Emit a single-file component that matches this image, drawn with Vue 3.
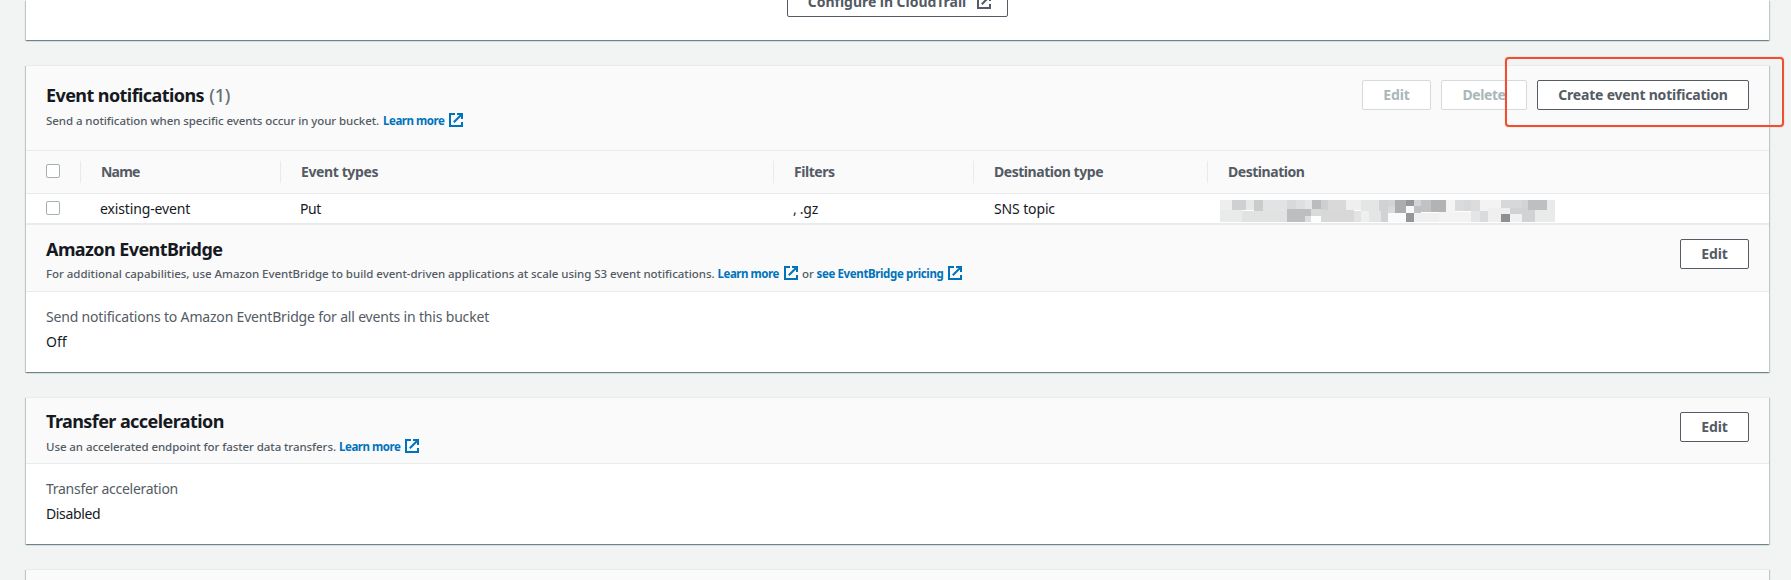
<script setup>
import { h } from 'vue'

const ExternalIcon = () =>
  h('svg', { class: 'ext', viewBox: '0 0 14 14', width: 14, height: 14, fill: 'none', stroke: 'currentColor', 'stroke-width': 2 }, [
    h('path', { d: 'M6 1H1V13H13V9' }),
    h('path', { d: 'M8 1H13V6' }),
    h('path', { d: 'M13 1L4.8 9.2' })
  ])

// x, y, width, height, fill of each block in the redacted destination
const blocks = [
  [0, 0, 36, 30, '#eeeeee'], [36, 0, 42, 30, '#cfd0d1'], [78, 0, 24, 30, '#e6e8e7'], [102, 0, 27, 33, '#c9cbcc'],
  [0, 30, 66, 36, '#e9ebea'], [66, 33, 135, 33, '#e1e3e2'], [129, 0, 72, 36, '#e2e3e4'],
  [201, 0, 27, 27, '#d7d9db'], [228, 0, 27, 27, '#dddfe1'], [255, 0, 21, 27, '#e5e6e7'], [276, 0, 27, 27, '#bbbcbe'],
  [303, 0, 21, 30, '#cecfd1'], [201, 27, 72, 39, '#bdbec0'], [273, 27, 30, 21, '#d9dadb'], [255, 48, 18, 18, '#dcdedf'],
  [273, 48, 30, 18, '#fdfdfd'], [324, 0, 54, 66, '#d9d9d9'], [303, 30, 99, 36, '#d8d8d8'],
  [378, 0, 45, 30, '#efefef'], [423, 0, 54, 33, '#e3e6e5'], [402, 33, 21, 33, '#e1e4e3'], [423, 33, 24, 33, '#efefef'],
  [447, 33, 36, 33, '#e3e6e5'], [477, 0, 27, 33, '#d0d2d4'], [483, 33, 21, 33, '#d0d2d4'], [504, 0, 21, 21, '#d3d4d6'],
  [504, 21, 21, 18, '#d9dadb'], [525, 0, 33, 39, '#acadaf'], [558, 0, 24, 18, '#96979b'], [504, 39, 54, 27, '#fafafa'],
  [558, 18, 24, 21, '#fafafa'], [558, 39, 24, 27, '#96979b'], [582, 0, 21, 18, '#d3d4d7'], [582, 18, 21, 21, '#c0c1c3'],
  [603, 0, 30, 36, '#c1c2c4'], [633, 0, 45, 36, '#b2b3b5'], [582, 38, 75, 28, '#f0f0f0'], [657, 36, 96, 30, '#f3f3f3'],
  [678, 0, 27, 36, '#f4f4f4'], [705, 0, 27, 33, '#dadbdd'], [732, 0, 21, 33, '#d6d8da'], [753, 0, 27, 33, '#dadcde'],
  [753, 33, 27, 33, '#e3e6e5'], [780, 33, 24, 33, '#d9dbdd'], [780, 0, 63, 33, '#f3f3f3'], [804, 24, 66, 42, '#efefef'],
  [843, 0, 63, 24, '#d6d8da'], [843, 42, 27, 24, '#8f9093'], [870, 24, 54, 18, '#d1d2d4'], [870, 42, 36, 24, '#f1f1f1'],
  [906, 30, 39, 36, '#d1d2d4'], [906, 0, 18, 24, '#d3d4d6'], [924, 0, 57, 30, '#bebfc1'], [945, 30, 60, 36, '#e9ebea'],
  [981, 0, 24, 30, '#e9ebea']
]
</script>

<template>
  <main class="page">
    <section class="card card-top">
      <button class="btn btn-trail">Configure in CloudTrail<ExternalIcon /></button>
    </section>

    <section class="card card-events">
      <header class="head head-events">
        <div>
          <h2>Event notifications <span class="count">(1)</span></h2>
          <p class="desc">
            <span class="d1">Send a notification when specific events occur in your bucket.</span>
            <a>Learn more</a><ExternalIcon />
          </p>
        </div>
        <div class="actions">
          <button class="btn off w-edit">Edit</button>
          <button class="btn off w-delete">Delete</button>
          <button class="btn w-create">Create event notification</button>
        </div>
        <div class="highlight"></div>
      </header>
      <div class="row thead">
        <div class="check"><i class="box"></i></div>
        <div class="name">Name</div>
        <div class="types">Event types</div>
        <div class="filters">Filters</div>
        <div class="kind">Destination type</div>
        <div class="dest">Destination</div>
      </div>
      <div class="row trow">
        <div class="check"><i class="box"></i></div>
        <div class="name">existing-event</div>
        <div class="types">Put</div>
        <div class="filters">, .gz</div>
        <div class="kind">SNS topic</div>
        <div class="dest">
          <svg class="mosaic" viewBox="0 0 1005 66" width="335" height="22" shape-rendering="crispEdges">
            <rect v-for="(b, i) in blocks" :key="i" :x="b[0]" :y="b[1]" :width="b[2]" :height="b[3]" :fill="b[4]" />
          </svg>
        </div>
      </div>
      <header class="head head-bridge">
        <div>
          <h2>Amazon EventBridge</h2>
          <p class="desc">
            <span class="d2">For additional capabilities, use Amazon EventBridge to build event-driven applications at scale using S3 event notifications.</span>
            <a>Learn more</a><ExternalIcon /><span class="or">or</span><a class="pricing">see EventBridge pricing</a><ExternalIcon />
          </p>
        </div>
        <button class="btn w-edit">Edit</button>
      </header>
      <div class="body">
        <div class="label">Send notifications to Amazon EventBridge for all events in this bucket</div>
        <div class="value">Off</div>
      </div>
    </section>

    <section class="card card-accel">
      <header class="head head-accel">
        <div>
          <h2>Transfer acceleration</h2>
          <p class="desc">
            <span class="d3">Use an accelerated endpoint for faster data transfers.</span>
            <a>Learn more</a><ExternalIcon />
          </p>
        </div>
        <button class="btn w-edit">Edit</button>
      </header>
      <div class="body">
        <div class="label tight">Transfer acceleration</div>
        <div class="value disabled">Disabled</div>
      </div>
    </section>

    <section class="card card-last"></section>
  </main>
</template>

<style>
body {
  background: #f2f3f3;
  overflow: hidden;
}
</style>

<style scoped>
.page {
  height: 580px;
  overflow: hidden;
  padding: 0 22px 0 26px;
  box-sizing: border-box;
  background: #f2f3f3;
  font-family: "Noto Sans", "Open Sans", sans-serif;
  font-size: 14px;
  line-height: 22px;
  color: #16191f;
  white-space: nowrap;
}
.card {
  box-sizing: border-box;
  background: #fff;
  border-top: 1px solid #e8ebeb;
  box-shadow: 0 1px 1px 0 rgba(0, 40, 52, 0.34), 1px 1px 1px 0 rgba(0, 40, 52, 0.17), -1px 1px 1px 0 rgba(0, 40, 52, 0.17);
  margin-bottom: 25px;
}
.card-top {
  height: 40px;
  border-top: 0;
  display: flex;
  justify-content: center;
  align-items: flex-start;
}
.card-events { height: 307px; }
.card-accel { height: 147px; }
.card-last { height: 40px; background: #fafafa; }

.head {
  box-sizing: border-box;
  display: flex;
  justify-content: space-between;
  align-items: flex-start;
  background: #fafafa;
  border-bottom: 1px solid #e8ebeb;
  padding: 0 20px;
}
.head-events { height: 85px; padding-top: 18px; position: relative; }
.head-events .actions { margin-top: -4px; }
.head-bridge { height: 67px; padding-top: 13px; }
.head-bridge .btn { margin-top: 1px; }
.head-accel { height: 66px; padding-top: 12px; }
.head-accel .btn { margin-top: 2px; }

h2 {
  margin: 0;
  font-size: 18px;
  line-height: 22px;
  font-weight: 700;
  letter-spacing: -0.58px;
}
.count {
  font-weight: 500;
  color: #687078;
  letter-spacing: -0.1px;
  margin-left: 1px;
}
.desc {
  margin: 7px 0 0;
  font-size: 11.5px;
  line-height: 16px;
  height: 16px;
  font-weight: 500;
  color: #545b64;
  display: flex;
  align-items: center;
}
.head-bridge .desc { margin-top: 6px; }
.d1 { letter-spacing: -0.073px; width: 337px; }
.d2 { letter-spacing: -0.04px; width: 671.5px; }
.d3 { letter-spacing: -0.08px; width: 293px; }
a {
  color: #0073bb;
  font-weight: 700;
  letter-spacing: -0.45px;
  width: 66px;
}
.d2 + a { width: 66.5px; }
a.pricing { letter-spacing: -0.37px; width: 131.5px; }
.or { width: 14.5px; margin-left: 4px; }
.ext { flex: none; display: block; }
.desc .ext { color: #0073bb; position: relative; top: -1px; }

.actions { display: flex; gap: 10px; }
.btn {
  box-sizing: border-box;
  height: 30px;
  padding: 0;
  display: flex;
  justify-content: center;
  align-items: center;
  background: #fff;
  border: 1px solid #545b64;
  border-radius: 2px;
  font: 700 14px/22px "Noto Sans", "Open Sans", sans-serif;
  color: #545b64;
  letter-spacing: -0.2px;
}
.off { color: #aab7b8; border-color: #d5dbdb; }
.w-edit { width: 69px; letter-spacing: -0.1px; }
.w-delete { width: 86px; letter-spacing: -0.42px; }
.w-create { width: 212px; }
.btn-trail { width: 221px; margin-top: -13px; letter-spacing: -0.04px; }
.btn-trail .ext { margin: 0 -4px 0 11px; }

.highlight {
  position: absolute;
  left: 1478.5px;
  top: -9.5px;
  width: 279.5px;
  height: 70px;
  box-sizing: border-box;
  border: 2px solid #f04e30;
  border-radius: 4px;
  box-shadow: 0 0 1px rgba(240, 78, 48, 0.8);
}

.row { box-sizing: border-box; display: flex; align-items: center; }
.row > div { box-sizing: border-box; height: 22px; }
.check { width: 54px; padding-left: 20px; }
.name { width: 200px; padding-left: 20px; }
.types { width: 493px; padding-left: 20px; }
.filters { width: 200px; padding-left: 20px; }
.kind { width: 234px; padding-left: 20px; }
.dest { padding-left: 20px; }
.thead {
  height: 43px;
  background: #fafafa;
  border-bottom: 1px solid #e8ebeb;
  font-weight: 700;
  color: #545b64;
  letter-spacing: -0.46px;
}
.thead .check { width: 55px; }
.thead .check, .thead .name, .thead .types, .thead .filters, .thead .kind {
  border-right: 1px solid #e8ebeb;
}
.thead .name { letter-spacing: -0.8px; }
.thead .types { letter-spacing: -0.39px; }
.trow {
  height: 31px;
  border-bottom: 2px solid #e8ebeb;
  letter-spacing: -0.13px;
}
.trow .types { letter-spacing: -0.39px; }
.trow .filters { letter-spacing: -0.26px; }
.trow .kind { padding-left: 21px; }
.trow .dest { padding-left: 13px; height: 23px; align-self: flex-end; }
.mosaic { display: block; }
.box {
  display: block;
  box-sizing: border-box;
  width: 14px;
  height: 14px;
  margin-top: 3px;
  background: #fff;
  border: 1px solid #a5b0b1;
  border-radius: 2px;
}

.body { padding: 14px 20px 0; }
.label { color: #545b64; letter-spacing: -0.18px; }
.tight { letter-spacing: -0.275px; }
.value { margin-top: 3px; }
.disabled { letter-spacing: -0.36px; }
</style>
